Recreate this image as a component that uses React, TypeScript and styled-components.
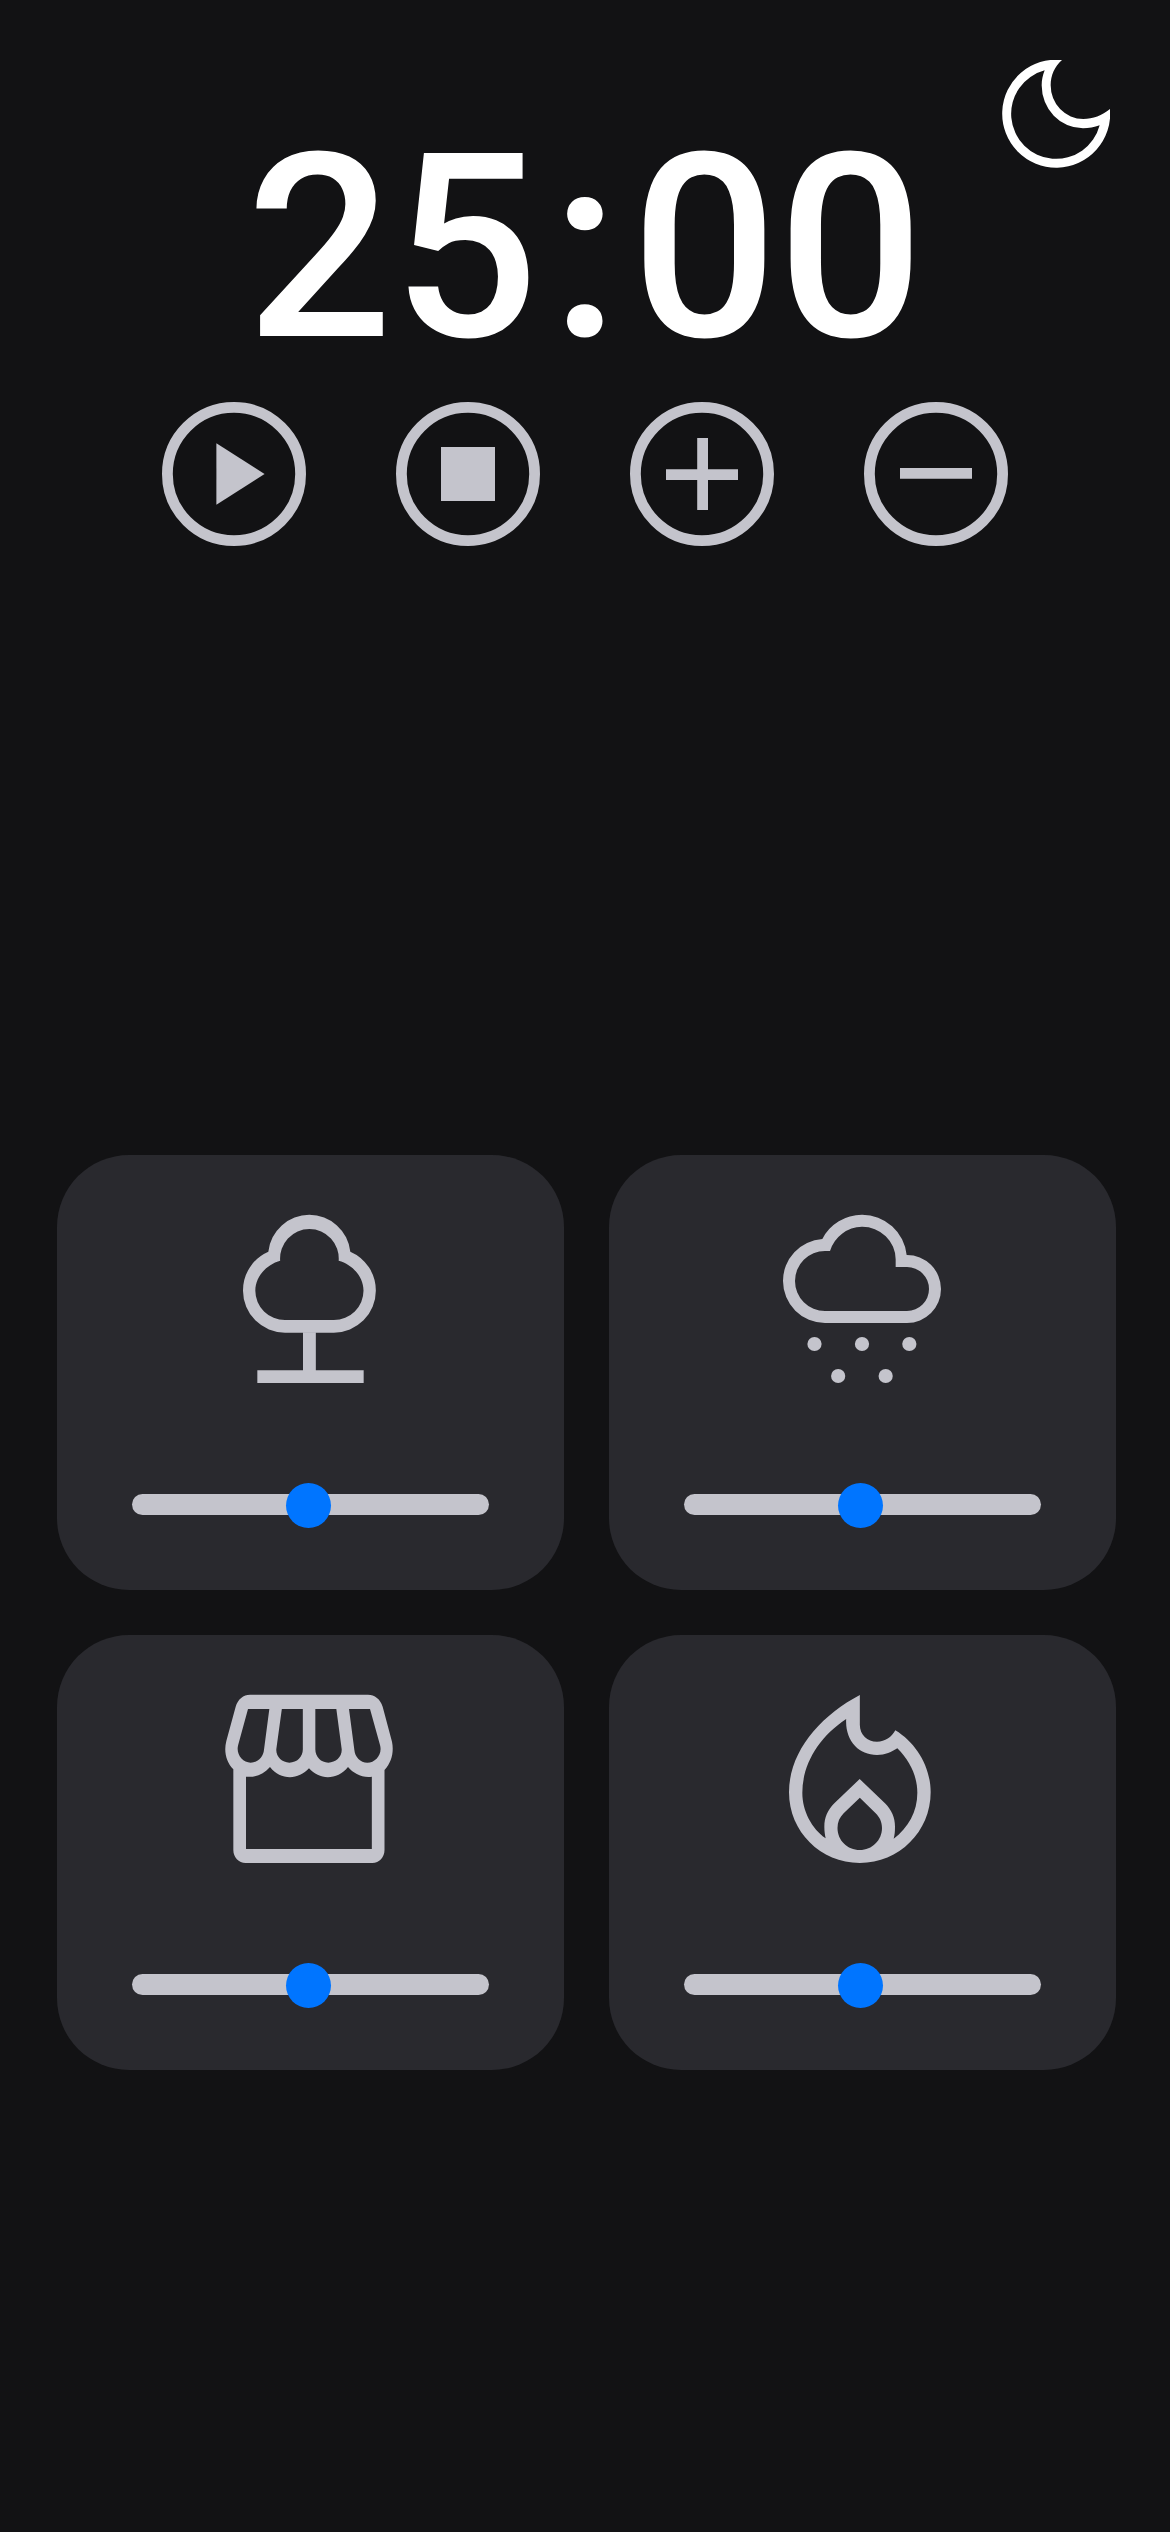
import React, { useEffect, useState } from "react";
import styled, { createGlobalStyle } from "styled-components";

const colors = {
  page: "#121214",
  card: "#29292e",
  muted: "#c4c4cc",
  white: "#ffffff",
  accent: "#0075ff",
};

const GlobalStyle = createGlobalStyle`
  * { box-sizing: border-box; margin: 0; padding: 0; }
  body { background: ${colors.page}; }
`;

const Page = styled.main`
  width: 1170px;
  height: 2532px;
  overflow: hidden;
  display: flex;
  flex-direction: column;
  background: ${colors.page};
  font-family: Roboto, sans-serif;
`;

const Header = styled.header`
  display: grid;
  height: 402px;
  grid-template-columns: 1fr;
  align-items: start;
`;

const Time = styled.h1`
  grid-area: 1 / 1;
  display: flex;
  justify-content: center;
  padding-top: 97px;
  font-size: 257.4px;
  line-height: 302px;
  font-weight: 500;
  color: ${colors.white};
`;

const Colon = styled.span`
  width: 92.4px;
  text-align: center;
`;

const ThemeButton = styled.button`
  grid-area: 1 / 1;
  justify-self: end;
  display: flex;
  margin: 60px 60px 0 0;
  border: 0;
  background: none;
  color: ${colors.white};
  cursor: pointer;
`;

const Controls = styled.nav`
  display: flex;
  justify-content: center;
  gap: 90px;
`;

const ControlButton = styled.button`
  display: flex;
  border: 0;
  background: none;
  color: ${colors.muted};
  cursor: pointer;
`;

const Sounds = styled.section`
  display: grid;
  grid-template-columns: 507px 507px;
  grid-auto-rows: 435px;
  gap: 45px;
  margin: 609px 54px 0 57px;
`;

const Card = styled.article`
  display: flex;
  flex-direction: column;
  align-items: flex-start;
  padding: 60px 75px 0;
  border-radius: 72px;
  background: ${colors.card};
  color: ${colors.muted};
`;

const CardIcon = styled.div`
  display: flex;
  margin-left: 93px;
`;

const Slider = styled.input`
  appearance: none;
  -webkit-appearance: none;
  display: block;
  width: 357px;
  height: 21px;
  margin-top: 111px;
  border-radius: 10.5px;
  background: ${colors.muted};
  cursor: pointer;

  &::-webkit-slider-thumb {
    -webkit-appearance: none;
    position: relative;
    top: 1.4px;
    width: 45px;
    height: 45px;
    border-radius: 50%;
    background: ${colors.accent};
  }
`;

const MoonIcon = () => (
  <svg width="108" height="108" viewBox="66 60 324 324" fill="currentColor" fillRule="evenodd">
    <path d="M246 60 A162 162 0 1 0 390 207 C366 227 339 237 310 237 A98 101 0 0 1 212 135 C212 106 224 80 246 60 Z M194 91 C188 106 185 120 185 136 A124 129 0 0 0 309 265 C326 265 343 262 359 256 A135 135 0 1 1 194 91 Z" />
  </svg>
);

const Ring = ({ children }: { children: React.ReactNode }) => (
  <svg width="144" height="144" viewBox="0 0 144 144" fill="currentColor">
    <circle cx="72" cy="72" r="66.6" fill="none" stroke="currentColor" strokeWidth="10.8" />
    {children}
  </svg>
);

const Glyph = ({ viewBox, children }: { viewBox: string; children: React.ReactNode }) => (
  <svg width="168" height="168" viewBox={viewBox} fill="currentColor" fillRule="evenodd" overflow="visible">
    {children}
  </svg>
);

const TreeIcon = () => (
  <Glyph viewBox="15 45 504 504">
    <path d="M145 155 A123.7 123.7 0 0 1 391 155 A127 127 0 0 1 467.5 272 A126 126 0 0 1 341.5 398 H195 A126 126 0 0 1 69 272 A127 127 0 0 1 145 155 Z M180.5 182 C138 194 106 231 106 272 A89 88 0 0 0 195 360 H341.5 A89 88 0 0 0 430.5 272 C430.5 231 399 194 356 182 A88 88.5 0 1 0 180.5 182 Z" />
    <path d="M249 397 H287.5 V511 H431 V549 H112 V511 H249 Z" />
  </Glyph>
);

const RainIcon = () => (
  <Glyph viewBox="21 45 504 504">
    <path d="M157 117 A134 134 0 0 1 276 44.5 A134 134 0 0 1 410 165 A102 102 0 0 1 513 267 A102 102 0 0 1 411 369 H165 A126 126 0 0 1 39 243 A126 126 0 0 1 157 117 Z M180 153 H165 A90 90 0 0 0 75 243 A90 90 0 0 0 165 333 H411 A66 66 0 0 0 477 267 A66 66 0 0 0 411 201 H377 V178 A100 98 0 0 0 276 80.5 A102 102 0 0 0 180 153 Z" />
    {[[133.5, 432], [276, 432], [418, 432], [204.5, 528], [347, 528]].map(([x, y]) => (
      <circle key={x} cx={x} cy={y} r="21.3" />
    ))}
  </Glyph>
);

const StoreIcon = () => (
  <Glyph viewBox="45 45 504 504">
    <path d="M120 44.5 H474 C494 44.5 511 58 518 80 L546 185 C552 214 546 246 523.5 270 V510 C523.5 532 508 549 487 549 H107 C86 549 70 532 70 510 V268 C48 246 41 214 49 183 L77 80 C84 58 100 44.5 120 44.5 Z M108 290 V507 H485.5 V290 C456 294 430 280 414 261 C382 301 328 301 297 265 C265 301 211 301 180 261 C161 282 138 293 108 290 Z M114 87 L84.5 195 C77 222 97 248 122 248 C143 248 160 231 162 209 L178 87 Z M215.5 87 L199 207 C197 230 216 248 238 248 C261 248 278.5 231 278.5 208 V87 Z M316 87 V208 C316 231 333 248 355 248 C378 248 397 230 395 207 L379 87 Z M417 87 L433 209 C435 231 451 248 472 248 C497 248 518 222 510 195 L480 87 Z" />
  </Glyph>
);

const FireIcon = () => (
  <Glyph viewBox="21 45 504 504">
    <path d="M269.5 45 V134 C269.5 164 292 185 321 185 C346 185 364 172 376 151 C440 190 482 262 482 337 C482 455 387 549 269.5 549 C152 549 57 455 57 337 C57 215 150 108 269.5 45 Z M228.5 117 C145 172 97 255 97 338 C97 393 125 445 167 475 C165 465 163 455 163 440 C163 413 173 390 193 370 L269 297 L345 370 C365 390 375 413 375 440 C375 455 374 465 371 476 C415 443 442 395 442 338 C442 290 420 242 382 205 C365 216 346 225 321 225 C266 225 225 182 228.5 117 Z M269.5 353 L221 400 C209 412 202.5 426 202.5 444 C202.5 481 232 510 269.5 510 C306 510 336 481 336 444 C336 426 329 412 317 400 Z" />
  </Glyph>
);

const sounds = [
  { name: "Forest", Icon: TreeIcon },
  { name: "Rain", Icon: RainIcon },
  { name: "Coffee shop", Icon: StoreIcon },
  { name: "Fireplace", Icon: FireIcon },
];

const twoDigits = (value: number) => String(value).padStart(2, "0");

export default function App() {
  const [seconds, setSeconds] = useState(1500);
  const [running, setRunning] = useState(false);

  useEffect(() => {
    if (!running) return;
    const id = window.setInterval(() => setSeconds((s) => Math.max(0, s - 1)), 1000);
    return () => window.clearInterval(id);
  }, [running]);

  return (
    <Page>
      <GlobalStyle />
      <Header>
        <Time>
          <span>{twoDigits(Math.floor(seconds / 60))}</span>
          <Colon>:</Colon>
          <span>{twoDigits(seconds % 60)}</span>
        </Time>
        <ThemeButton>
          <MoonIcon />
        </ThemeButton>
      </Header>
      <Controls>
        <ControlButton onClick={() => setRunning(true)}>
          <Ring><path d="M54.4 41.2 L102.6 72 L54.4 102.8 Z" /></Ring>
        </ControlButton>
        <ControlButton onClick={() => setRunning(false)}>
          <Ring><path d="M45 45 H99 V99 H45 Z" /></Ring>
        </ControlButton>
        <ControlButton onClick={() => setSeconds((s) => s + 300)}>
          <Ring><path d="M67.2 36 H78 V67.2 H108 V78 H78 V108 H67.2 V78 H36 V67.2 H67.2 Z" /></Ring>
        </ControlButton>
        <ControlButton onClick={() => setSeconds((s) => Math.max(0, s - 300))}>
          <Ring><path d="M36 66 H108 V76.8 H36 Z" /></Ring>
        </ControlButton>
      </Controls>
      <Sounds>
        {sounds.map(({ name, Icon }) => (
          <Card key={name}>
            <CardIcon><Icon /></CardIcon>
            <Slider type="range" min="0" max="1" step="0.005" defaultValue="0.495" />
          </Card>
        ))}
      </Sounds>
    </Page>
  );
}
